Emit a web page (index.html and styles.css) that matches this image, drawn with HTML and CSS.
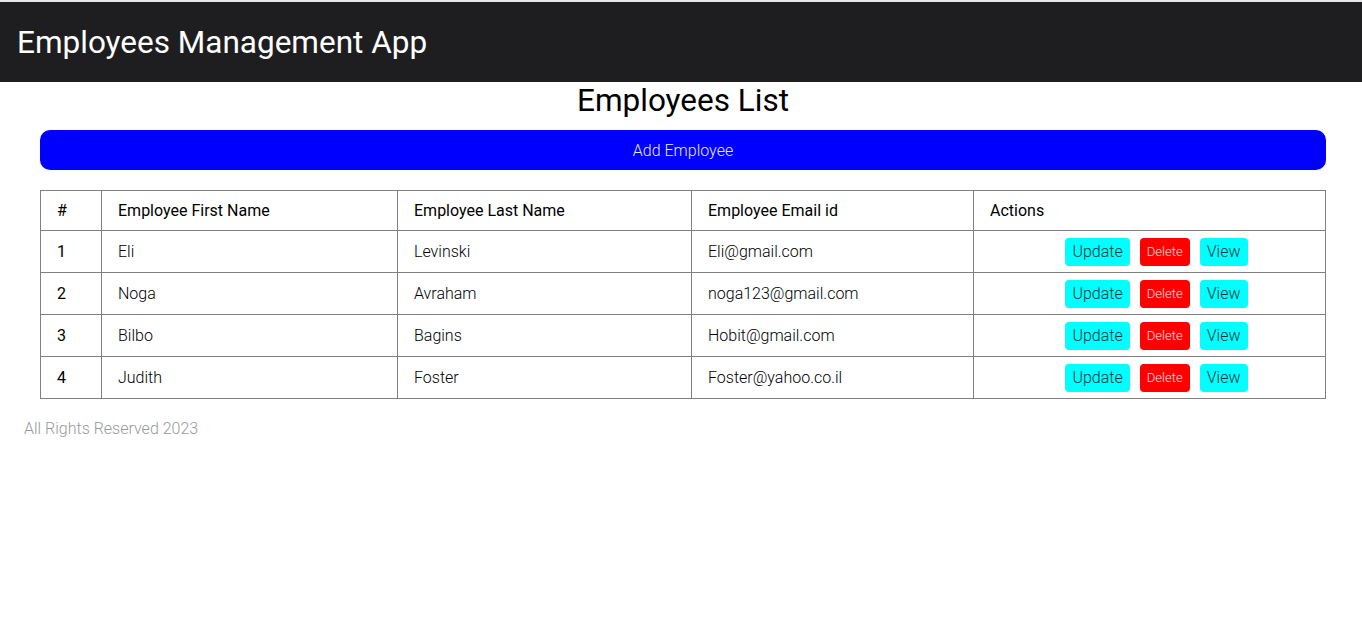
FILE: index.html
```html
<!DOCTYPE html>
<html>
<head>
<meta charset="utf-8">
<link rel="stylesheet" href="styles.css">
</head>
<body>
<header class="navbar"><span class="brand">Employees Management App</span></header>
<main class="container">
  <h2 class="title">Employees List</h2>
  <button class="add-btn">Add Employee</button>
  <table class="emp-table">
    <thead>
      <tr><th class="c-num">#</th><th class="c-first">Employee First Name</th><th class="c-last">Employee Last Name</th><th class="c-email">Employee Email id</th><th>Actions</th></tr>
    </thead>
    <tbody>
      <tr><td class="num">1</td><td>Eli</td><td>Levinski</td><td>Eli@gmail.com</td><td><div class="actions"><button class="btn info">Update</button><button class="btn danger">Delete</button><button class="btn info">View</button></div></td></tr>
      <tr><td class="num">2</td><td>Noga</td><td>Avraham</td><td>noga123@gmail.com</td><td><div class="actions"><button class="btn info">Update</button><button class="btn danger">Delete</button><button class="btn info">View</button></div></td></tr>
      <tr><td class="num">3</td><td>Bilbo</td><td>Bagins</td><td>Hobit@gmail.com</td><td><div class="actions"><button class="btn info">Update</button><button class="btn danger">Delete</button><button class="btn info">View</button></div></td></tr>
      <tr><td class="num">4</td><td>Judith</td><td>Foster</td><td>Foster@yahoo.co.il</td><td><div class="actions"><button class="btn info">Update</button><button class="btn danger">Delete</button><button class="btn info">View</button></div></td></tr>
    </tbody>
  </table>
</main>
<footer class="footer">All Rights Reserved 2023</footer>
</body>
</html>
```
FILE: styles.css
```css
* { box-sizing: border-box; }
html, body { margin: 0; padding: 0; }
body {
  font-family: Roboto, "Liberation Sans", sans-serif;
  font-weight: 300;
  color: #000;
  background: #fff;
  border-top: 2px solid #e6e6e6;
}
.navbar {
  background: #1e1e20;
  height: 80px;
  display: flex;
  align-items: center;
  padding-left: 17px;
}
.brand {
  color: #fff;
  font-size: 31.5px;
  font-weight: 400;
  line-height: 1;
  margin-top: 2px;
}
.container {
  padding: 0 36px 0 40px;
}
.title {
  margin: 0;
  padding-top: 1px;
  font-size: 31.5px;
  font-weight: 400;
  text-align: center;
  line-height: 36px;
  height: 48px;
}
.add-btn {
  display: block;
  width: 100%;
  height: 40px;
  border: none;
  border-radius: 10px;
  background: #0000ff;
  color: #e6e6ff;
  font-family: Roboto, "Liberation Sans", sans-serif;
  font-weight: 300;
  font-size: 16px;
  margin-bottom: 20px;
}
.emp-table {
  width: 100%;
  border-collapse: collapse;
  font-size: 16px;
}
.emp-table th, .emp-table td {
  border: 1px solid #808080;
  padding: 0 16px;
  text-align: left;
}
.emp-table th {
  font-weight: 400;
  height: 40px;
}
.emp-table td { height: 42px; }
.c-num { width: 61px; }
.c-first { width: 296px; }
.c-last { width: 294px; }
.c-email { width: 282px; }
.emp-table td.num { font-weight: 400; }
.actions {
  display: flex;
  justify-content: center;
  gap: 10px;
  padding-left: 14px;
}
.btn {
  border: none;
  border-radius: 4px;
  height: 28px;
  font-family: Roboto, "Liberation Sans", sans-serif;
  font-weight: 300;
  padding: 0 7px;
  cursor: pointer;
}
.info {
  background: #00ffff;
  color: #0a3434;
  font-size: 16px;
}
.danger {
  background: #ff0000;
  color: #ffe0e0;
  font-size: 13px;
  font-weight: 300;
  width: 50px;
  padding: 0;
}
.footer {
  padding: 20px 24px;
  color: #999;
  font-size: 16px;
  font-weight: 300;
}
```
